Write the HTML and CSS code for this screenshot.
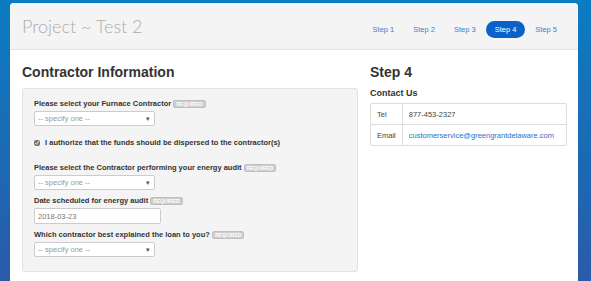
FILE: index.html
```html
<!DOCTYPE html>
<html lang="en">
<head>
    <meta charset="UTF-8">
    <meta name="viewport" content="width=device-width, initial-scale=1.0">
    <title>Project ~ Test 2</title>
    <link rel="stylesheet" href="styles.css">
</head>
<body>
    <div class="card">
        <header class="card-header">
            <h1 class="project-title">Project ~ Test 2</h1>
            <nav class="steps">
                <a href="#">Step 1</a>
                <a href="#">Step 2</a>
                <a href="#">Step 3</a>
                <a href="#" class="active">Step 4</a>
                <a href="#">Step 5</a>
            </nav>
        </header>
        <div class="card-body">
            <div class="main-col">
                <h2>Contractor Information</h2>
                <div class="well">
                    <div class="form-group">
                        <label>Please select your Furnace Contractor <span class="badge">REQUIRED</span></label>
                        <div class="select-wrap">
                            <select><option>-- specify one --</option></select>
                        </div>
                    </div>
                    <div class="checkbox">
                        <label><input type="checkbox" checked> I authorize that the funds should be dispersed to the contractor(s)</label>
                    </div>
                    <div class="form-group">
                        <label>Please select the Contractor performing your energy audit <span class="badge">REQUIRED</span></label>
                        <div class="select-wrap">
                            <select><option>-- specify one --</option></select>
                        </div>
                    </div>
                    <div class="form-group">
                        <label>Date scheduled for energy audit <span class="badge">REQUIRED</span></label>
                        <input type="text" class="date-input" value="2018-03-23">
                    </div>
                    <div class="form-group last">
                        <label>Which contractor best explained the loan to you? <span class="badge">REQUIRED</span></label>
                        <div class="select-wrap">
                            <select><option>-- specify one --</option></select>
                        </div>
                    </div>
                </div>
            </div>
            <div class="side-col">
                <h2>Step 4</h2>
                <h3>Contact Us</h3>
                <table class="contact">
                    <tr>
                        <td class="key">Tel</td>
                        <td>877-453-2327</td>
                    </tr>
                    <tr>
                        <td class="key">Email</td>
                        <td><a href="#">customerservice@greengrantdelaware.com</a></td>
                    </tr>
                </table>
            </div>
        </div>
    </div>
</body>
</html>
```

FILE: styles.css
```css
html, body {
    height: 100%;
}
body {
    font-family: 'Liberation Sans', Arial, sans-serif;
    background: linear-gradient(to bottom, #0b7cc2, #2a5ba8);
    margin: 0;
    padding: 3px 13px 0 10px;
    color: #333;
    overflow: hidden;
    box-sizing: border-box;
}
.card {
    background-color: white;
    border-radius: 4px 4px 0 0;
    min-height: 300px;
}
.card-header {
    display: flex;
    align-items: center;
    justify-content: space-between;
    background-color: #f4f4f4;
    border-bottom: 1px solid #e4e4e4;
    border-radius: 4px 4px 0 0;
    height: 46px;
    padding: 0 12px 0 12px;
}
.project-title {
    font-family: 'Lato', sans-serif;
    font-weight: 300;
    font-size: 18px;
    color: #adadad;
    margin: 0;
}
.steps {
    display: flex;
    gap: 1px;
    padding-top: 7px;
}
.steps a {
    font-size: 7.5px;
    color: #3d7fd6;
    text-decoration: none;
    padding: 4px 9px;
    border-radius: 9px;
    line-height: 9px;
}
.steps a.active {
    background-color: #0a61c8;
    color: white;
}
.card-body {
    display: grid;
    grid-template-columns: 336px 1fr;
    gap: 12px;
    padding: 0 11px 0 12px;
}
h2 {
    font-size: 14px;
    margin: 14px 0 8px 0;
    line-height: 16px;
}
h3 {
    font-size: 9px;
    margin: 0 0 5px 0;
}
.well {
    background-color: #f4f4f4;
    border: 1px solid #e3e3e3;
    border-radius: 3px;
    padding: 10px 11px 14px 11px;
}
.form-group {
    margin-bottom: 6px;
}
.form-group.last {
    margin-bottom: 0;
}
.form-group label, .checkbox label {
    display: block;
    font-size: 7.5px;
    font-weight: bold;
    line-height: 10px;
    margin-bottom: 2px;
}
.badge {
    display: inline-block;
    background-color: #cdcdcd;
    border: 1px solid #c0c0c0;
    border-radius: 2px;
    color: white;
    font-size: 5px;
    line-height: 6px;
    padding: 0 2px;
    vertical-align: 0;
}
.select-wrap {
    position: relative;
    width: 121px;
}
.select-wrap::after {
    content: '\25BE';
    position: absolute;
    right: 5px;
    top: 3px;
    font-size: 7px;
    line-height: 9px;
    color: #555;
    pointer-events: none;
}
select, .date-input {
    display: block;
    font-family: 'Liberation Sans', Arial, sans-serif;
    font-size: 7.5px;
    color: #999;
    background-color: white;
    border: 1px solid #ccc;
    border-radius: 2px;
    box-sizing: border-box;
    padding: 0 3px;
    margin: 0;
    outline: none;
}
select {
    -webkit-appearance: none;
    appearance: none;
    width: 100%;
    height: 15px;
}
.date-input {
    width: 127px;
    height: 16px;
    color: #777;
}
.checkbox {
    margin: 12px 0 15px 0;
}
.checkbox label {
    margin-bottom: 0;
}
.checkbox input {
    width: 6px;
    height: 6px;
    margin: 0 3px 0 0;
    vertical-align: -1px;
    accent-color: #777;
}
.contact {
    border-collapse: separate;
    border-spacing: 0;
    border: 1px solid #ddd;
    border-radius: 2px;
    width: 100%;
    font-size: 7.5px;
}
.contact td {
    padding: 0 6px;
    height: 20px;
    color: #444;
}
.contact tr + tr td {
    border-top: 1px solid #ddd;
}
.contact td.key {
    width: 18px;
    border-right: 1px solid #ddd;
}
.contact a {
    color: #2f6fc2;
    text-decoration: none;
}
```
